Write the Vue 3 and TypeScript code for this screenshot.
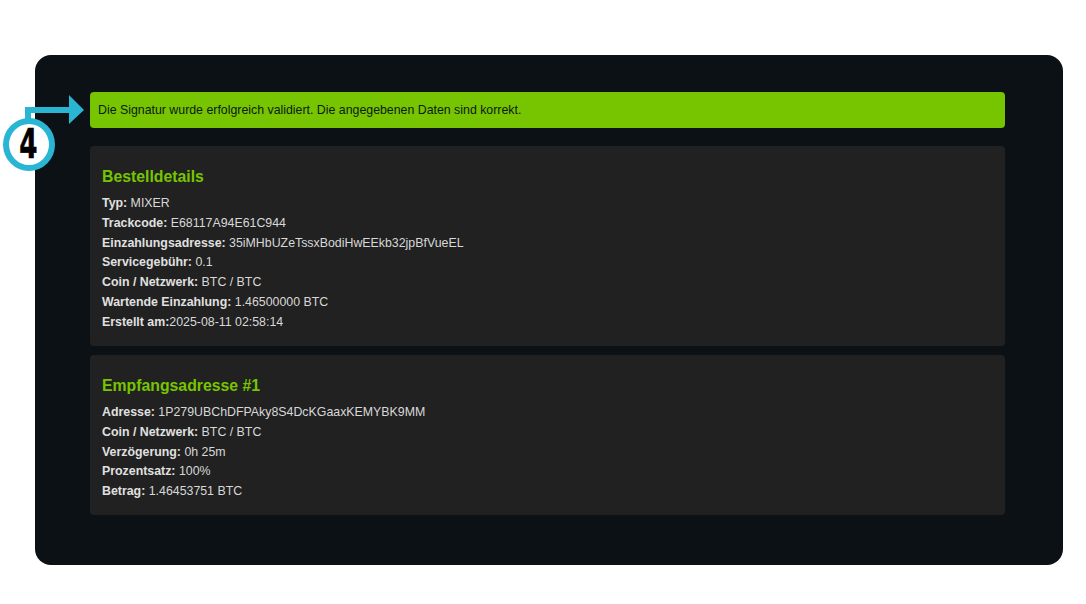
<script setup lang="ts">
interface Row { label: string; value: string }
const order: Row[] = [
  { label: 'Typ:', value: ' MIXER' },
  { label: 'Trackcode:', value: ' E68117A94E61C944' },
  { label: 'Einzahlungsadresse:', value: ' 35iMHbUZeTssxBodiHwEEkb32jpBfVueEL' },
  { label: 'Servicegebühr:', value: ' 0.1' },
  { label: 'Coin / Netzwerk:', value: ' BTC / BTC' },
  { label: 'Wartende Einzahlung:', value: ' 1.46500000 BTC' },
  { label: 'Erstellt am:', value: '2025-08-11 02:58:14' },
]
const receive: Row[] = [
  { label: 'Adresse:', value: ' 1P279UBChDFPAky8S4DcKGaaxKEMYBK9MM' },
  { label: 'Coin / Netzwerk:', value: ' BTC / BTC' },
  { label: 'Verzögerung:', value: ' 0h 25m' },
  { label: 'Prozentsatz:', value: ' 100%' },
  { label: 'Betrag:', value: ' 1.46453751 BTC' },
]
</script>

<template>
  <div class="page">
    <main class="panel">
      <div class="alert">Die Signatur wurde erfolgreich validiert. Die angegebenen Daten sind korrekt.</div>
      <section class="card first">
        <h2>Bestelldetails</h2>
        <p v-for="r in order" :key="r.label"><strong>{{ r.label }}</strong>{{ r.value }}</p>
      </section>
      <section class="card second">
        <h2>Empfangsadresse #1</h2>
        <p v-for="r in receive" :key="r.label"><strong>{{ r.label }}</strong>{{ r.value }}</p>
      </section>
    </main>
    <svg class="arrow" width="90" height="40" viewBox="0 90 90 40" aria-hidden="true">
      <path d="M25 121V107H69V95L84 110L69 124V113H31V121Z" fill="#2bb5d5" />
    </svg>
    <div class="badge"><span>4</span></div>
  </div>
</template>

<style>
html, body { margin: 0; background: #fff; }
</style>

<style scoped>
.page {
  position: relative;
  width: 1086px;
  height: 604px;
  overflow: hidden;
  padding: 55px 23px 39px 35px;
  box-sizing: border-box;
  font-family: "Liberation Sans", Arial, sans-serif;
}
.panel {
  height: 510px;
  box-sizing: border-box;
  padding: 37px 58px 0 55px;
  background: #0c1115;
  border-radius: 16px;
}
.alert {
  height: 36px;
  box-sizing: border-box;
  padding-left: 8px;
  background: #76c500;
  border-radius: 4px;
  color: #0c1a10;
  font-size: 12.35px;
  line-height: 36px;
}
.card {
  box-sizing: border-box;
  padding: 20px 12px 0;
  background: #212121;
  border-radius: 4px;
  color: #d8d8d8;
  font-size: 12.37px;
}
.first { height: 200px; margin-top: 18px; }
.second { height: 160px; margin-top: 9px; }
h2 {
  margin: 0 0 8px;
  color: #76c500;
  font-size: 15.8px;
  line-height: 21px;
  font-weight: 700;
}
h2 + p { margin-top: -1px; }
p {
  margin: 0;
  line-height: 19.8px;
  white-space: pre;
}
strong { font-weight: 700; color: #e0e0e0; }
.arrow { position: absolute; left: 0; top: 90px; }
.badge {
  position: absolute;
  left: 3px;
  top: 118px;
  width: 52px;
  height: 53px;
  box-sizing: border-box;
  border: 6px solid #2bb5d5;
  border-radius: 50%;
  background: #fff;
  display: flex;
  align-items: center;
  justify-content: center;
}
.badge span {
  color: #000;
  font-family: "DejaVu Sans", sans-serif;
  font-weight: 700;
  font-size: 41px;
  line-height: 1;
  -webkit-text-stroke: 0.6px #000;
  margin-left: -2px;
  transform: scaleX(.64);
}
</style>
